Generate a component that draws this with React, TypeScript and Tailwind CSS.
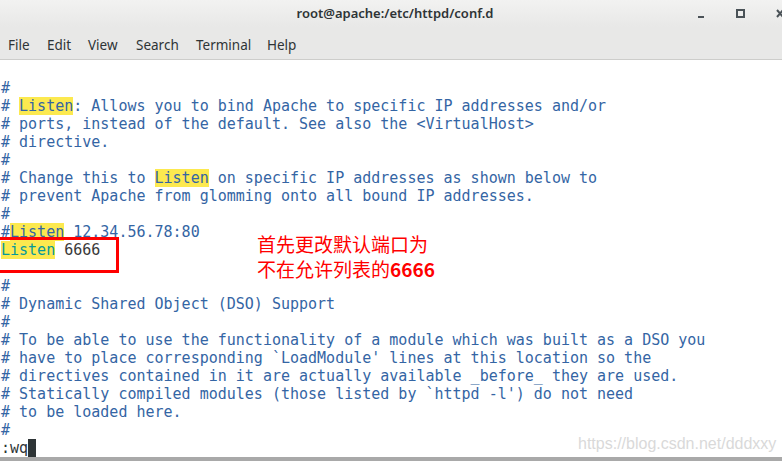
import React from "react";

const HL = ({ children }: { children: React.ReactNode }) => (
  <span className="bg-[#fce94f]">{children}</span>
);

const lines: React.ReactNode[] = [
  "#",
  <>
    # <HL>Listen</HL>: Allows you to bind Apache to specific IP addresses and/or
  </>,
  "# ports, instead of the default. See also the <VirtualHost>",
  "# directive.",
  "#",
  <>
    # Change this to <HL>Listen</HL> on specific IP addresses as shown below to
  </>,
  "# prevent Apache from glomming onto all bound IP addresses.",
  "#",
  <>
    #<HL>Listen</HL> 12.34.56.78:80
  </>,
  <>
    <span className="bg-[#fce94f] text-[#06989a]">Listen</span>
    <span className="text-[#3a3a3a]"> 6666</span>
  </>,
  "",
  "#",
  "# Dynamic Shared Object (DSO) Support",
  "#",
  "# To be able to use the functionality of a module which was built as a DSO you",
  "# have to place corresponding `LoadModule' lines at this location so the",
  "# directives contained in it are actually available _before_ they are used.",
  "# Statically compiled modules (those listed by `httpd -l') do not need",
  "# to be loaded here.",
  "#",
];

const menus = [
  { label: "File", w: "w-[39px]" },
  { label: "Edit", w: "w-[41px]" },
  { label: "View", w: "w-[48px]" },
  { label: "Search", w: "w-[60px]" },
  { label: "Terminal", w: "w-[71px]" },
  { label: "Help", w: "w-[40px]" },
];

export default function App() {
  return (
    <div className="w-[782px] h-[461px] overflow-hidden flex flex-col bg-white">
      {/* Title bar */}
      <div className="h-[27px] shrink-0 flex items-center relative bg-gradient-to-b from-[#f2f2f1] to-[#e8e8e7] font-['Noto_Sans',sans-serif]">
        <div className="flex-1 text-center text-[13px] font-semibold text-[#2e3436] pl-[8px]">
          root@apache:/etc/httpd/conf.d
        </div>
        <div className="absolute right-0 top-0 h-full flex items-center">
          <svg width="10" height="10" viewBox="0 0 10 10" className="mr-[29px]">
            <rect x="1" y="7" width="6" height="2" fill="#4a5257" />
          </svg>
          <svg width="10" height="10" viewBox="0 0 10 10" className="mr-[30px]">
            <rect x="1" y="1" width="7" height="7" fill="none" stroke="#4a5257" strokeWidth="2" />
          </svg>
          <svg width="6" height="10" viewBox="0 0 6 10">
            <path d="M1 1 L7 8 M7 1 L1 8" stroke="#4a5257" strokeWidth="2" fill="none" />
          </svg>
        </div>
      </div>

      {/* Menu bar */}
      <div className="h-[33px] shrink-0 flex items-center pt-[4px] pl-[8px] bg-[#e8e8e7] border-b border-[#cdcdcb] font-['Noto_Sans',sans-serif] text-[13.5px] text-[#2e3436]">
        {menus.map((m) => (
          <span key={m.label} className={m.w}>
            {m.label}
          </span>
        ))}
      </div>

      {/* Terminal */}
      <div className="relative flex-1 pt-[19px] pl-[1px] font-['DejaVu_Sans_Mono',monospace] text-[15px] text-[#3465a4] whitespace-pre">
        {lines.map((l, i) => (
          <div key={i} className="h-[18px] leading-[18px]">
            {l}
          </div>
        ))}
        <div className="h-[18px] leading-[18px] flex text-[#2e3436]">
          <span>:wq</span>
          <span className="inline-block w-[8px] h-[18px] bg-[#2e3436]" />
        </div>

        {/* red highlight box */}
        <div className="absolute left-[-10px] top-[177px] w-[129px] h-[36px] border-[3px] border-[#ff0000]" />

        {/* annotation */}
        <div className="absolute left-[257px] top-[171px] text-[#ff0000] text-[19px] leading-[25px] font-['Noto_Sans_CJK_SC',sans-serif] whitespace-pre">
          <div>首先更改默认端口为</div>
          <div>
            不在允许列表的<span className="font-bold">6666</span>
          </div>
        </div>

        {/* watermark */}
        <div className="absolute left-[578px] top-[372px] text-[16px] text-[#d9d9d9] font-['Liberation_Sans',sans-serif]">
          https://blog.csdn.net/dddxxy
        </div>
      </div>

      {/* bottom strip */}
      <div className="h-[4px] shrink-0 bg-[#a9a9a9]" />
    </div>
  );
}
